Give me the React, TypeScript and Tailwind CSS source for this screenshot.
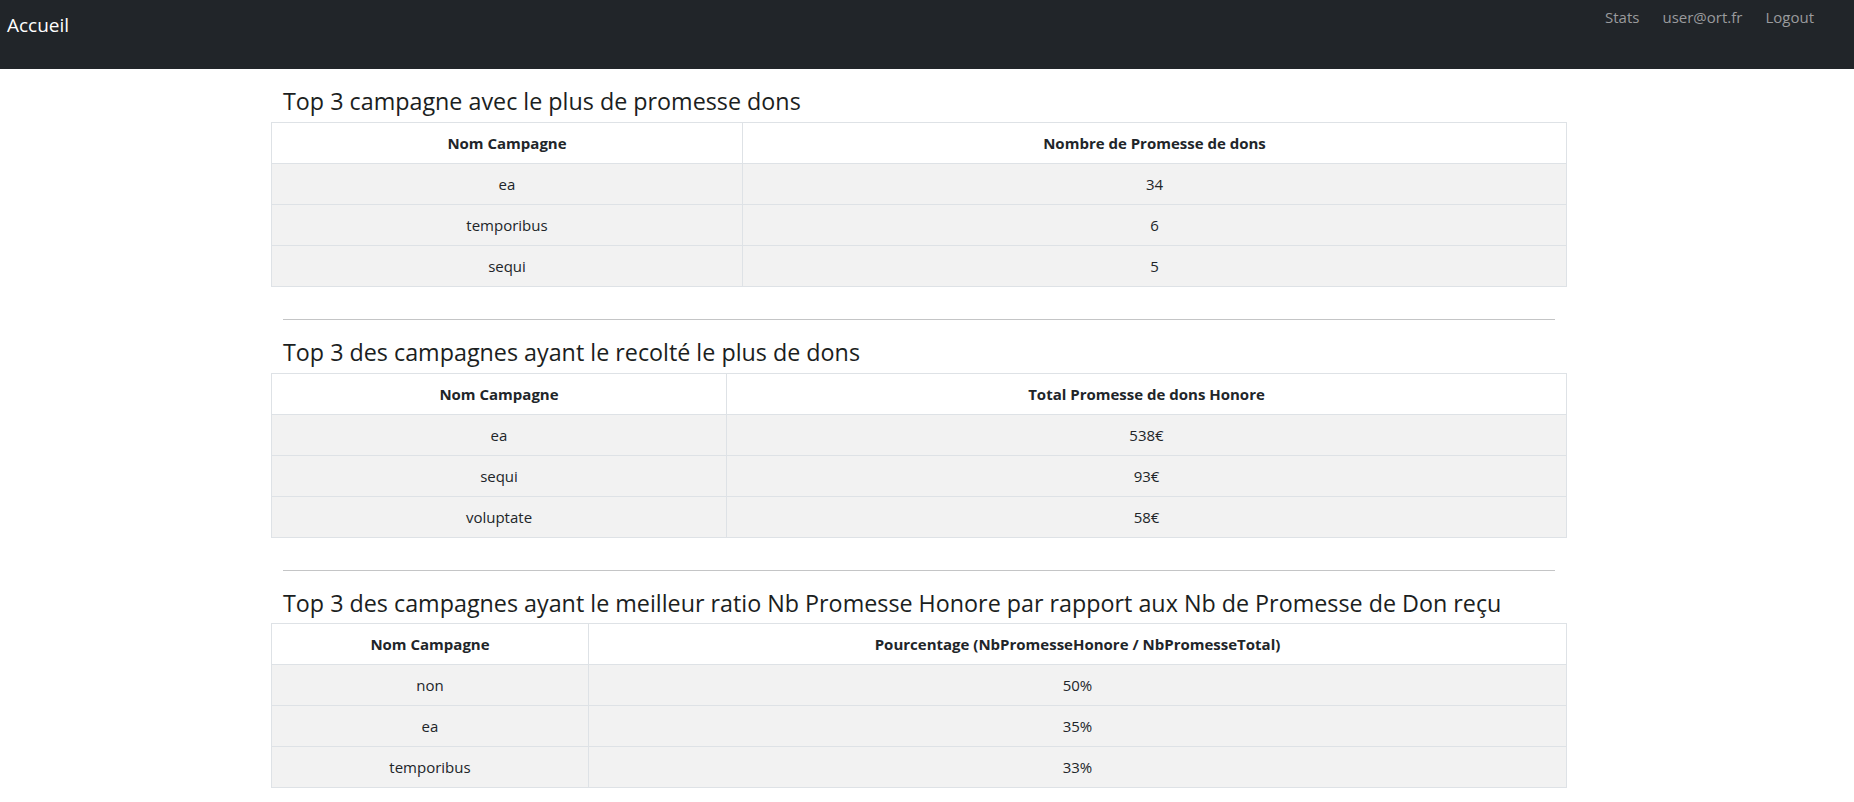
import React from "react";

type Table = {
  title: string;
  col1W: string;
  head2: string;
  rows: [string, string][];
};

const tables: Table[] = [
  {
    title: "Top 3 campagne avec le plus de promesse dons",
    col1W: "w-[471px]",
    head2: "Nombre de Promesse de dons",
    rows: [
      ["ea", "34"],
      ["temporibus", "6"],
      ["sequi", "5"],
    ],
  },
  {
    title: "Top 3 des campagnes ayant le recolté le plus de dons",
    col1W: "w-[455px]",
    head2: "Total Promesse de dons Honore",
    rows: [
      ["ea", "538€"],
      ["sequi", "93€"],
      ["voluptate", "58€"],
    ],
  },
  {
    title:
      "Top 3 des campagnes ayant le meilleur ratio Nb Promesse Honore par rapport aux Nb de Promesse de Don reçu",
    col1W: "w-[317px]",
    head2: "Pourcentage (NbPromesseHonore / NbPromesseTotal)",
    rows: [
      ["non", "50%"],
      ["ea", "35%"],
      ["temporibus", "33%"],
    ],
  },
];

function StatTable({ t, last }: { t: Table; last: boolean }) {
  return (
    <section className="flex flex-col">
      <h4 className="mx-3 mb-[4.8px] text-[23.3px] leading-[32px] font-medium text-[#1b1e21]">
        {t.title}
      </h4>
      <table className="w-full table-fixed border-collapse text-[15px] leading-6 text-[#212529] mb-4">
        <thead>
          <tr className="bg-white">
            <th className={`${t.col1W} border border-[#dee2e6] p-2 text-center font-bold`}>
              Nom Campagne
            </th>
            <th className="border border-[#dee2e6] p-2 text-center font-bold">{t.head2}</th>
          </tr>
        </thead>
        <tbody>
          {t.rows.map((r, i) => (
            <tr key={i} className="bg-[#f2f2f2]">
              <td className="border border-[#dee2e6] p-2 text-center">{r[0]}</td>
              <td className="border border-[#dee2e6] p-2 text-center">{r[1]}</td>
            </tr>
          ))}
        </tbody>
      </table>
      {!last && <hr className="mx-3 my-4 border-0 border-t border-[#c4c5c6]" />}
    </section>
  );
}

export default function App() {
  return (
    <div
      className="min-h-screen bg-white"
      style={{ fontFamily: '"Open Sans", "Noto Sans", sans-serif' }}
    >
      <nav className="flex h-[69px] items-start justify-between bg-[#212529] pl-[7px] pr-[40px]">
        <a className="pt-[10px] text-[19px] leading-[30px] text-white">Accueil</a>
        <ul className="flex gap-[23px] pt-[5px] text-[15px] leading-6 text-[#9a9b9d]">
          <li>Stats</li>
          <li>user@ort.fr</li>
          <li>Logout</li>
        </ul>
      </nav>
      <main className="ml-[271px] w-[1296px] pt-4">
        {tables.map((t, i) => (
          <StatTable key={i} t={t} last={i === tables.length - 1} />
        ))}
      </main>
    </div>
  );
}
